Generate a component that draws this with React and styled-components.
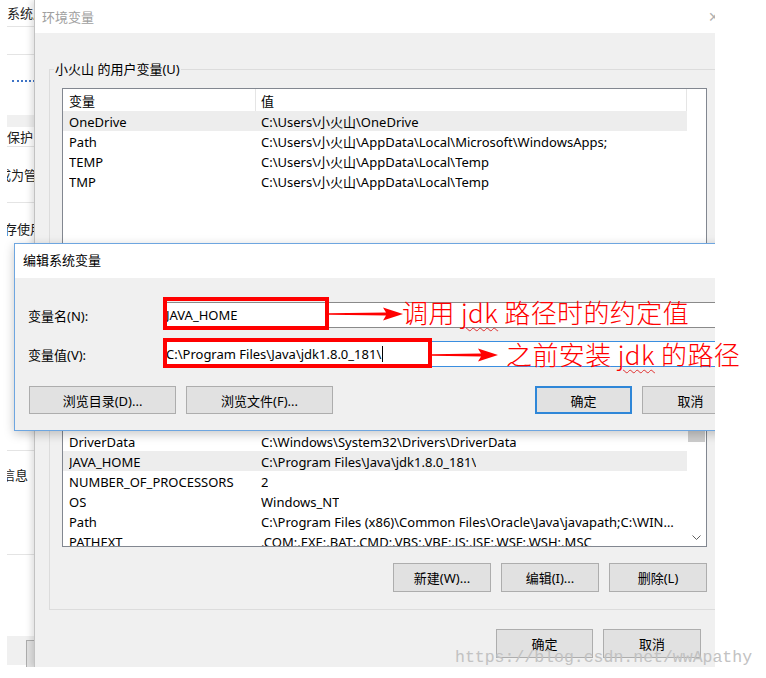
import React from "react";
import styled, { createGlobalStyle } from "styled-components";

const UI_FONT = `"Noto Sans", "Noto Sans CJK SC", sans-serif`;
const NOTE_FONT = `"Noto Sans CJK SC", "Noto Sans", sans-serif`;

const GlobalStyle = createGlobalStyle`
  html, body { margin: 0; padding: 0; background: #fff; }
  body { font-family: ${UI_FONT}; }
  * { box-sizing: border-box; }
`;

const Desktop = styled.div`
  position: relative;
  width: 766px;
  height: 678px;
  overflow: hidden;
  background: #fff;
  font-family: ${UI_FONT};
  font-size: 13px;
  color: #000;
`;

const Capture = styled.div`
  position: relative;
  width: 715px;
  height: 667px;
  overflow: hidden;
`;

/* ---------- background "system properties" window ---------- */
const BackPane = styled.div`
  position: absolute;
  left: 7px;
  top: 0;
  width: 40px;
  height: 667px;
  overflow: hidden;
  background: #fff;
  display: flex;
  flex-direction: column;
`;

const BackRow = styled.div`
  flex: none;
  height: ${(p) => p.$h}px;
  border-bottom: ${(p) => (p.$line ? "1px solid #e4e4e4" : "none")};
  background: ${(p) => (p.$gray ? "#f0f0f0" : "transparent")};
  display: flex;
  align-items: ${(p) => (p.$end ? "flex-end" : "center")};
  white-space: nowrap;
`;

const BackText = styled.span`
  margin-left: ${(p) => p.$shift || 0}px;
  font-size: 13px;
  line-height: 16px;
  color: #1a1a1a;
`;

const BackLink = styled.span`
  margin-left: 5px;
  width: 40px;
  border-bottom: 2px dotted #3f74c6;
  margin-bottom: -1px;
`;

const BackButton = styled.span`
  margin: 4px 0 0 19px;
  width: 30px;
  height: 30px;
  align-self: flex-start;
  border: 1px solid #adadad;
  background: #e1e1e1;
`;

/* ---------- environment variables window ---------- */
const EnvWindow = styled.div`
  position: absolute;
  left: 34px;
  top: 0;
  width: 700px;
  height: 667px;
  background: #f0f0f0;
  border-left: 1px solid #c2c2c2;
  box-shadow: -3px 0 6px rgba(0, 0, 0, 0.12);
  display: flex;
  flex-direction: column;
`;

const TitleBar = styled.div`
  flex: none;
  height: ${(p) => p.$h}px;
  background: #fff;
  display: flex;
  align-items: center;
  justify-content: space-between;
  padding-left: ${(p) => p.$pad}px;
  padding-bottom: ${(p) => p.$lift || 0}px;
  color: ${(p) => (p.$inactive ? "#a0a0a0" : "#000")};
  font-size: 13px;
`;

const CloseBox = styled.span`
  width: 40px;
  text-align: center;
  color: #b0b0b0;
  font-size: 14px;
`;

const EnvBody = styled.div`
  flex: 1;
  display: flex;
  flex-direction: column;
  padding: 0 14px;
`;

const GroupBox = styled.fieldset`
  margin: ${(p) => p.$top}px 0 0;
  padding: 10px 12px ${(p) => p.$bottom}px 12px;
  border: 1px solid #dcdcdc;
  min-width: 0;
`;

const GroupLegend = styled.legend`
  padding: 0 1px;
  margin-left: -8px;
  line-height: 18px;
  font-size: 13px;
`;

const ListView = styled.div`
  height: ${(p) => p.$h}px;
  border: 1px solid #828790;
  background: #fff;
  display: flex;
  overflow: hidden;
`;

const ListBody = styled.div`
  width: 624px;
  flex: none;
  display: flex;
  flex-direction: column;
`;

const HeaderRow = styled.div`
  flex: none;
  display: grid;
  grid-template-columns: 193px 431px;
  height: 22px;
`;

const HeaderCell = styled.div`
  display: flex;
  align-items: center;
  padding-left: ${(p) => (p.$first ? 6 : 5)}px;
  border-right: 1px solid #e5e5e5;
`;

const Row = styled.div`
  flex: none;
  display: grid;
  grid-template-columns: 193px 431px;
  height: 20px;
  background: ${(p) => (p.$selected ? "#ededed" : "transparent")};
`;

const Cell = styled.div`
  display: flex;
  align-items: center;
  padding: 1px 4px 0 ${(p) => (p.$first ? 6 : 5)}px;
  white-space: nowrap;
  overflow: hidden;
  span {
    overflow: hidden;
    text-overflow: ellipsis;
  }
`;

const ScrollBar = styled.div`
  flex: 1;
  display: flex;
  flex-direction: column;
  background: #fff;
`;

const ScrollArrow = styled.div`
  flex: none;
  height: 17px;
  display: flex;
  align-items: center;
  justify-content: center;
`;

const ScrollTrack = styled.div`
  flex: 1;
  display: flex;
  flex-direction: column;
`;

const ScrollThumb = styled.div`
  height: 56px;
  margin: 0 1px;
  background: #cdcdcd;
`;

const ButtonRow = styled.div`
  display: flex;
  justify-content: ${(p) => p.$justify || "flex-end"};
  gap: 10px;
  margin-top: ${(p) => p.$top}px;
  padding-right: ${(p) => p.$right || 0}px;
`;

const ButtonGroup = styled.div`
  display: flex;
  gap: 10px;
  margin-left: ${(p) => p.$left || 0}px;
`;

const Button = styled.button`
  flex: none;
  width: ${(p) => p.$w}px;
  height: ${(p) => p.$h}px;
  padding: 0;
  background: #e1e1e1;
  border: ${(p) => (p.$default ? "2px solid #2f87d8" : "1px solid #adadad")};
  font-family: ${UI_FONT};
  font-size: 13px;
  color: #000;
  white-space: nowrap;
`;

/* ---------- edit system variable dialog ---------- */
const EditWindow = styled.div`
  position: absolute;
  left: 14px;
  top: 243px;
  width: 738px;
  height: 188px;
  border: 1px solid #6ea6e0;
  background: #f0f0f0;
  box-shadow: 0 3px 10px rgba(0, 0, 0, 0.22);
  display: flex;
  flex-direction: column;
`;

const EditBody = styled.div`
  flex: 1;
  padding: 24px 12px 0 13px;
  display: flex;
  flex-direction: column;
`;

const FormGrid = styled.div`
  display: grid;
  grid-template-columns: 135px 1fr;
  row-gap: 13px;
  align-items: center;
`;

const FieldLabel = styled.div`
  font-size: 13px;
`;

const TextField = styled.div`
  height: 26px;
  background: #fff;
  border: 1px solid ${(p) => (p.$focused ? "#3a8ee0" : "#8a8a8a")};
  padding-left: 2px;
  display: flex;
  align-items: center;
  white-space: nowrap;
  font-size: 13px;
`;

const Caret = styled.span`
  width: 1px;
  height: 16px;
  background: #000;
  margin-left: 1px;
`;

/* ---------- annotations ---------- */
const RedBox = styled.div`
  position: absolute;
  left: ${(p) => p.$x}px;
  top: ${(p) => p.$y}px;
  width: ${(p) => p.$w}px;
  height: ${(p) => p.$h}px;
  border: 4px solid #f00;
`;

const ArrowSvg = styled.svg`
  position: absolute;
  left: ${(p) => p.$x}px;
  top: ${(p) => p.$y}px;
`;

const Note = styled.div`
  position: absolute;
  left: ${(p) => p.$x}px;
  top: ${(p) => p.$y}px;
  font-family: ${NOTE_FONT};
  font-weight: 300;
  font-size: 26px;
  line-height: 30px;
  letter-spacing: 0.4px;
  color: #f00;
  white-space: pre;
`;

const Squiggle = styled.span`
  text-decoration: underline wavy #e03030;
  text-decoration-thickness: 1px;
  text-underline-offset: 4px;
`;

const Watermark = styled.div`
  position: absolute;
  left: 455px;
  top: 648px;
  font-family: "Liberation Mono", "DejaVu Sans Mono", monospace;
  font-size: 16.5px;
  line-height: 20px;
  color: #c2c2c2;
  white-space: nowrap;
`;

const userVars = [
  ["OneDrive", "C:\\Users\\小火山\\OneDrive", true],
  ["Path", "C:\\Users\\小火山\\AppData\\Local\\Microsoft\\WindowsApps;"],
  ["TEMP", "C:\\Users\\小火山\\AppData\\Local\\Temp"],
  ["TMP", "C:\\Users\\小火山\\AppData\\Local\\Temp"],
];

const systemVars = [
  ["CLASSPATH", ".;%JAVA_HOME%\\lib;%JAVA_HOME%\\lib\\tools.jar"],
  ["ComSpec", "C:\\WINDOWS\\system32\\cmd.exe"],
  ["DriverData", "C:\\Windows\\System32\\Drivers\\DriverData"],
  ["JAVA_HOME", "C:\\Program Files\\Java\\jdk1.8.0_181\\", true],
  ["NUMBER_OF_PROCESSORS", "2"],
  ["OS", "Windows_NT"],
  ["Path", "C:\\Program Files (x86)\\Common Files\\Oracle\\Java\\javapath;C:\\WINDOWS\\system32;C:\\WINDOWS"],
  ["PATHEXT", ".COM;.EXE;.BAT;.CMD;.VBS;.VBE;.JS;.JSE;.WSF;.WSH;.MSC"],
  ["PROCESSOR_ARCHITECTURE", "AMD64"],
];

function VarList({ rows, height, scroll }) {
  return (
    <ListView $h={height}>
      <ListBody>
        <HeaderRow>
          <HeaderCell $first>变量</HeaderCell>
          <HeaderCell>值</HeaderCell>
        </HeaderRow>
        {rows.map(([name, value, sel]) => (
          <Row key={name + value} $selected={sel}>
            <Cell $first>
              <span>{name}</span>
            </Cell>
            <Cell>
              <span>{value}</span>
            </Cell>
          </Row>
        ))}
      </ListBody>
      {scroll && (
        <ScrollBar>
          <ScrollArrow />
          <ScrollTrack>
            <ScrollThumb />
          </ScrollTrack>
          <ScrollArrow>
            <svg width="9" height="6" viewBox="0 0 9 6">
              <polyline points="0.5,0.5 4.5,4.5 8.5,0.5" fill="none" stroke="#606060" strokeWidth="1" />
            </svg>
          </ScrollArrow>
        </ScrollBar>
      )}
    </ListView>
  );
}

function Arrow({ x, y, w }) {
  const b = w - 17;
  return (
    <ArrowSvg $x={x} $y={y} width={w} height="16" viewBox={`0 0 ${w} 16`}>
      <path
        d={`M0 7.3 L${b} 6.6 L${b - 3} 1.5 L${w} 8 L${b - 3} 14.5 L${b} 9.4 L0 8.7 Z`}
        fill="#f00"
      />
    </ArrowSvg>
  );
}

export default function App() {
  return (
    <>
      <GlobalStyle />
      <Desktop>
        <Capture>
          <BackPane>
            <BackRow $h={27} $line>
              <BackText>系统属性</BackText>
            </BackRow>
            <BackRow $h={28} $line />
            <BackRow $h={26} $end>
              <BackLink />
            </BackRow>
            <BackRow $h={34} />
            <BackRow $h={12} $gray />
            <BackRow $h={20} $line>
              <BackText>保护</BackText>
            </BackRow>
            <BackRow $h={56} $line>
              <BackText $shift={-9}>成为管理</BackText>
            </BackRow>
            <BackRow $h={52}>
              <BackText $shift={-3}>存使用</BackText>
            </BackRow>
            <BackRow $h={196} $line />
            <BackRow $h={14} />
            <BackRow $h={20}>
              <BackText $shift={-5}>信息</BackText>
            </BackRow>
            <BackRow $h={70} $line />
            <BackRow $h={81} />
            <BackRow $h={29} $gray>
              <BackButton />
            </BackRow>
          </BackPane>

          <EnvWindow>
            <TitleBar $h={33} $pad={7} $inactive>
              <span>环境变量</span>
              <CloseBox>✕</CloseBox>
            </TitleBar>
            <EnvBody>
              <GroupBox $top={27} $bottom={10}>
                <GroupLegend>小火山 的用户变量(U)</GroupLegend>
                <VarList rows={userVars} height={210} />
              </GroupBox>
              <GroupBox $top={31} $bottom={17}>
                <GroupLegend>系统变量(S)</GroupLegend>
                <VarList rows={systemVars} height={179} scroll />
                <ButtonRow $top={16}>
                  <Button $w={98} $h={29}>新建(W)...</Button>
                  <Button $w={98} $h={29}>编辑(I)...</Button>
                  <Button $w={98} $h={29}>删除(L)</Button>
                </ButtonRow>
              </GroupBox>
              <ButtonRow $top={19} $right={19}>
                <Button $w={97} $h={29}>确定</Button>
                <Button $w={98} $h={29}>取消</Button>
              </ButtonRow>
            </EnvBody>
          </EnvWindow>

          <EditWindow>
            <TitleBar $h={34} $pad={8} $lift={3}>
              <span>编辑系统变量</span>
            </TitleBar>
            <EditBody>
              <FormGrid>
                <FieldLabel>变量名(N):</FieldLabel>
                <TextField>JAVA_HOME</TextField>
                <FieldLabel>变量值(V):</FieldLabel>
                <TextField $focused>
                  C:\Program Files\Java\jdk1.8.0_181\
                  <Caret />
                </TextField>
              </FormGrid>
              <ButtonRow $top={19} $justify="space-between">
                <ButtonGroup $left={1}>
                  <Button $w={147} $h={28}>浏览目录(D)...</Button>
                  <Button $w={147} $h={28}>浏览文件(F)...</Button>
                </ButtonGroup>
                <ButtonGroup>
                  <Button $w={97} $h={28} $default>确定</Button>
                  <Button $w={97} $h={28}>取消</Button>
                </ButtonGroup>
              </ButtonRow>
            </EditBody>
          </EditWindow>
        </Capture>

        <RedBox $x={163} $y={297} $w={166} $h={33} />
        <RedBox $x={163} $y={338} $w={269} $h={30} />
        <Arrow x={329} y={306} w={74} />
        <Arrow x={432} y={347} w={66} />
        <Note $x={402} $y={297}>
          调用 <Squiggle>jdk</Squiggle> 路径时的约定值
        </Note>
        <Note $x={506} $y={339}>
          之前安装 <Squiggle>jdk</Squiggle> 的路径
        </Note>
        <Watermark>https://blog.csdn.net/wwApathy</Watermark>
      </Desktop>
    </>
  );
}
